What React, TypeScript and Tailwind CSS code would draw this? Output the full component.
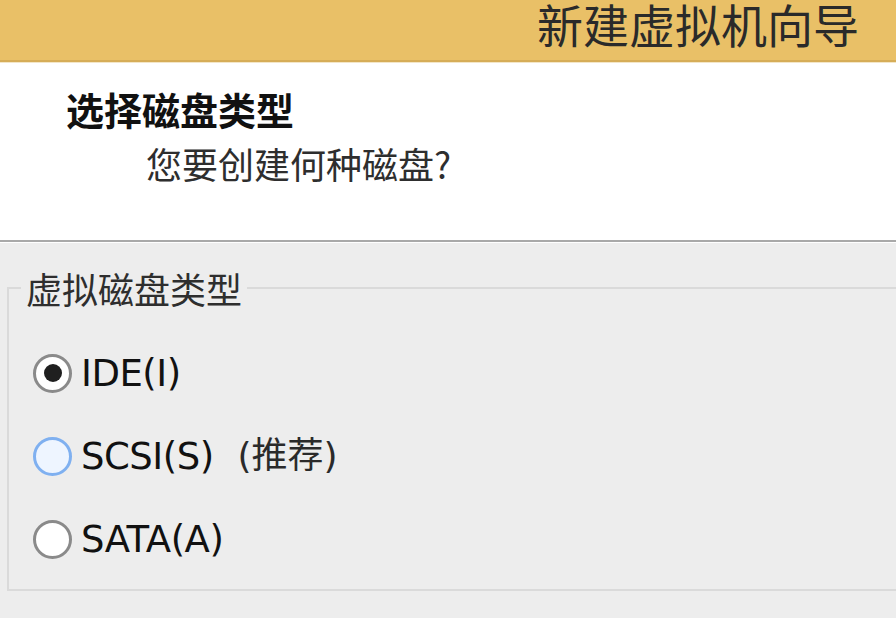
import { useState } from "react";

const FONT = "font-['DejaVu_Sans','Noto_Sans_CJK_SC',sans-serif]";

type DiskType = "ide" | "scsi" | "sata";

const options: { id: DiskType; label: string; note?: string }[] = [
  { id: "ide", label: "IDE(I)" },
  { id: "scsi", label: "SCSI(S)", note: "(推荐)" },
  { id: "sata", label: "SATA(A)" },
];

export default function App() {
  const [disk, setDisk] = useState<DiskType>("ide");

  return (
    <div className={`w-[896px] h-[618px] overflow-hidden bg-[#ededed] ${FONT}`}>
      {/* 标题栏 */}
      <div className="h-[62px] bg-[#e9c067] border-b-2 border-[#d6ad58] flex items-start justify-end pr-[37px]">
        <span className="text-[46px] leading-none text-[#2a2a2a] font-['Noto_Sans_CJK_SC',sans-serif]">
          新建虚拟机向导
        </span>
      </div>

      {/* 页头 */}
      <div className="h-[180px] bg-white border-t border-[#f3e6c8] border-b-2 border-b-[#a9a9a9] pt-[27px]">
        <div className="pl-[66px] text-[38px] leading-none font-bold text-[#111] font-['Noto_Sans_CJK_SC',sans-serif]">
          选择磁盘类型
        </div>
        <div className="pl-[146px] mt-[17px] text-[36px] leading-none text-[#2e2e2e] font-['Noto_Sans_CJK_SC',sans-serif]">
          您要创建何种磁盘?
        </div>
      </div>

      {/* 内容 */}
      <div className="border-t border-white pl-[7px]">
        <fieldset className="mt-[27px] -mr-[20px] border-2 border-[#dadada] pt-[47px] pb-[30px]">
          <legend className="ml-[12px] px-[5px] text-[36px] leading-none text-[#2e2e2e] font-['Noto_Sans_CJK_SC',sans-serif]">
            虚拟磁盘类型
          </legend>
          <div className="flex flex-col gap-[43px] pl-[24px]">
            {options.map((o) => (
              <Radio
                key={o.id}
                label={o.label}
                note={o.note}
                checked={disk === o.id}
                hover={o.id === "scsi"}
                onSelect={() => setDisk(o.id)}
              />
            ))}
          </div>
        </fieldset>
      </div>
    </div>
  );
}

function Radio({
  label,
  note,
  checked,
  hover,
  onSelect,
}: {
  label: string;
  note?: string;
  checked: boolean;
  hover?: boolean;
  onSelect: () => void;
}) {
  const ring = hover
    ? "border-[#7fb0f0] bg-[#eef5ff]"
    : "border-[#8a8a8a] bg-white";

  return (
    <label className="flex items-center h-[40px] cursor-pointer" onClick={onSelect}>
      <span
        className={`w-[39px] h-[39px] rounded-full border-[3px] flex items-center justify-center shrink-0 ${ring}`}
      >
        {checked && <span className="w-[18px] h-[18px] rounded-full bg-[#1f1f1f]" />}
      </span>
      <span className="ml-[9px] text-[37px] leading-none tracking-[-0.5px] text-[#111]">
        {label}
      </span>
      {note && (
        <span className="ml-[24px] text-[36px] leading-none text-[#2a2a2a]">{note}</span>
      )}
    </label>
  );
}
